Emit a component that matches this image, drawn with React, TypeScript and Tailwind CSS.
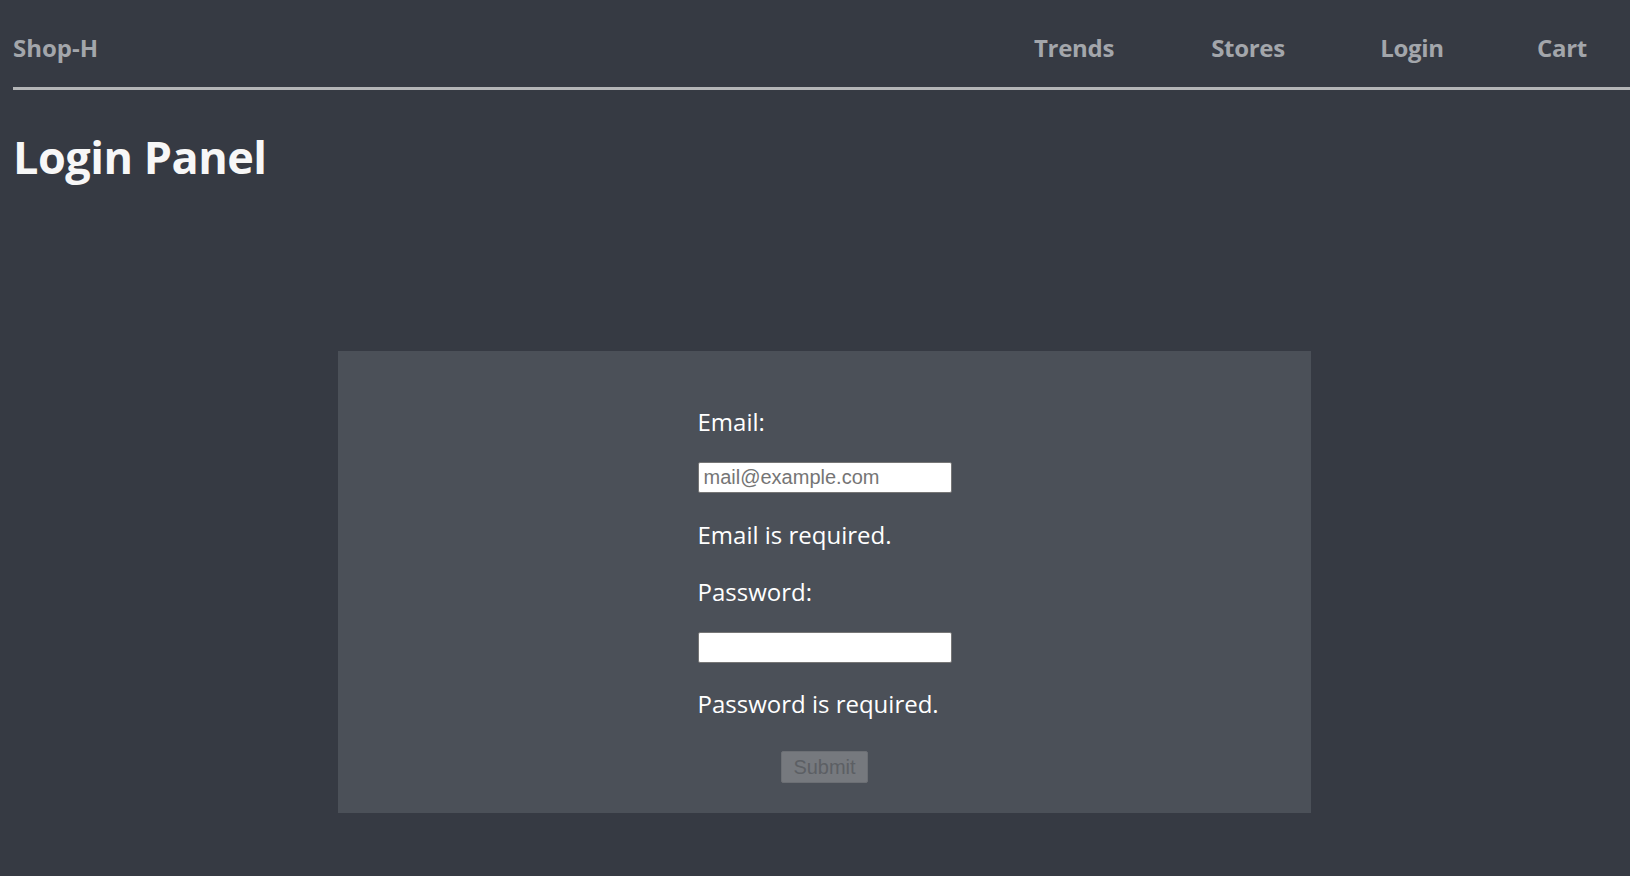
import React from "react";

export default function App() {
  const navItems = [
    { label: "Trends", cls: "w-[174px]" },
    { label: "Stores", cls: "w-[174px]" },
    { label: "Login", cls: "w-[154px] mr-[5px]" },
    { label: "Cart", cls: "w-[136px]" },
  ];
  return (
    <div className="min-h-screen bg-[#363a43] font-['Open_Sans','Liberation_Sans',sans-serif] overflow-hidden">
      <header className="ml-[13px] h-[90px] border-b-[3px] border-[#b4b5b7] flex items-start">
        <div className="pt-[32px] text-[24px] leading-[32px] font-bold text-[#a3a6ab]">
          Shop-H
        </div>
        <nav className="ml-auto flex pt-[32px]">
          {navItems.map((n) => (
            <a
              key={n.label}
              className={`${n.cls} text-center text-[24px] leading-[32px] font-bold text-[#a3a6ab] tracking-[-0.3px]`}
            >
              {n.label}
            </a>
          ))}
        </nav>
      </header>
      <h1 className="ml-[13px] mt-[39px] text-[45px] leading-[56px] font-bold text-[#f7f7f7] tracking-[-0.5px]">
        Login Panel
      </h1>
      <div className="ml-[338px] mt-[166px] w-[973px] h-[462px] bg-[#4b5058] flex justify-center">
        <form className="w-[254px] pt-[55px] flex flex-col text-white" onSubmit={(e) => e.preventDefault()}>
          <label className="text-[24px] leading-[32px]">Email:</label>
          <input
            type="email"
            placeholder="mail@example.com"
            className="mt-[24px] h-[31px] w-[254px] bg-white border border-[#767676] rounded-[2px] px-[5px] text-[20px] font-['Liberation_Sans',Arial,sans-serif] text-black placeholder:text-[#757575] outline-none"
          />
          <div className="mt-[26px] text-[24px] leading-[32px]">Email is required.</div>
          <label className="mt-[25px] text-[24px] leading-[32px]">Password:</label>
          <input
            type="password"
            className="mt-[24px] h-[31px] w-[254px] bg-white border border-[#767676] rounded-[2px] px-[5px] text-[20px] outline-none"
          />
          <div className="mt-[25px] text-[24px] leading-[32px]">Password is required.</div>
          <div className="mt-[31px] flex justify-center">
            <button
              type="submit"
              disabled
              className="h-[32px] w-[87px] bg-[#76797e] border border-[#6c6f74] rounded-[2px] text-[20px] leading-[30px] text-[#5c5f64] font-['Liberation_Sans',Arial,sans-serif]"
            >
              Submit
            </button>
          </div>
        </form>
      </div>
    </div>
  );
}
